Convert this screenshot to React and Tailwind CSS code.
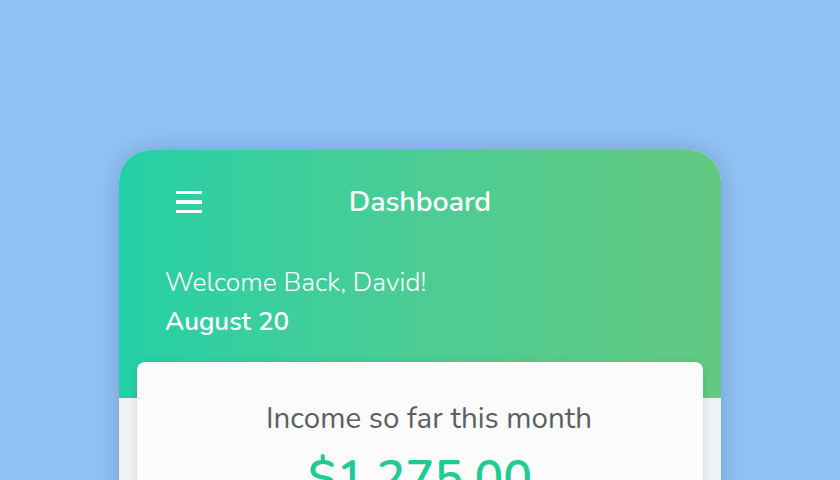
export default function App() {
  return (
    <div
      className="h-[480px] w-full overflow-hidden bg-[#93c2f4] flex justify-center pt-[150px]"
      style={{ fontFamily: 'Nunito, Lato, "Open Sans", sans-serif' }}
    >
      <div className="w-[602px] h-[400px] rounded-t-[32px] overflow-hidden bg-[#eef2f4] shadow-[0_0_24px_rgba(40,80,140,0.3)]">
        {/* header */}
        <div className="bg-gradient-to-r from-[#22d0a6] to-[#63c981] px-[46px] pt-[34px] pb-[60px] text-white">
          <div className="grid grid-cols-[1fr_auto_1fr] items-center h-9">
            <button className="ml-[11px] w-[26px] flex flex-col gap-[6px]">
              <span className="block h-[3.5px] bg-white" />
              <span className="block h-[3.5px] bg-white" />
              <span className="block h-[3.5px] bg-white" />
            </button>
            <h1 className="text-[28.5px] font-semibold leading-9">Dashboard</h1>
            <div />
          </div>
          <p className="mt-[46px] text-[26.5px] font-light leading-8">
            Welcome Back, David!
          </p>
          <p className="mt-[8px] text-[26px] font-semibold leading-8">August 20</p>
        </div>

        {/* income card */}
        <div className="relative mx-[18px] -mt-[36px] rounded-lg bg-[#fbfbfb] shadow-[0_2px_10px_rgba(0,0,0,0.12)] pt-[38px] pb-10 text-center">
          <p className="pl-[18px] text-[29.5px] text-[#5a6065] leading-9">
            Income so far this month
          </p>
          <p className="mt-[15px] text-[48px] font-semibold text-[#1fcb93] leading-[54px]">
            $1,275.00
          </p>
        </div>
      </div>
    </div>
  );
}
